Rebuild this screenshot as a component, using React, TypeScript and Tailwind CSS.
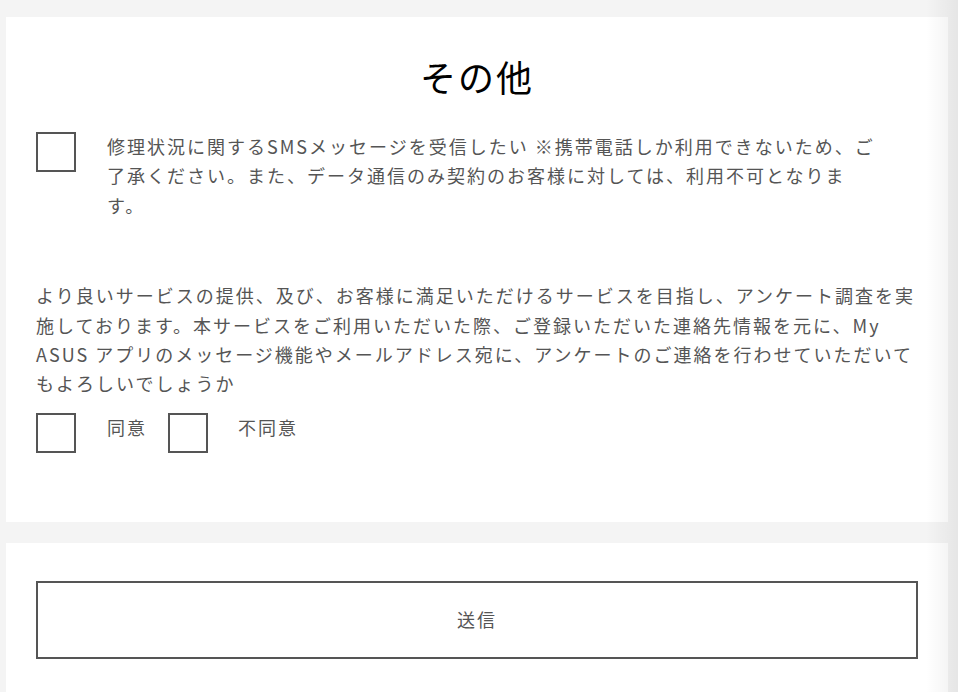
function Box() {
  return <div className="h-10 w-10 shrink-0 border-2 border-[#555]" />
}

export default function App() {
  const font = { fontFamily: '"Noto Sans CJK JP", "Noto Sans", sans-serif' }
  return (
    <div className="relative min-h-[692px] bg-[#f4f4f4] pt-[17px] pl-[6px] pr-[10px]" style={font}>
      <section className="bg-white px-[30px] pt-[34px] pb-[69px]">
        <h2 className="text-center text-[36px] leading-[51px] tracking-[2px] text-black">その他</h2>

        <div className="mt-[30px] flex items-start gap-[31px]">
          <Box />
          <p className="w-[770px] text-[18px] leading-[29.4px] tracking-[2px] text-[#555]">
            修理状況に関するSMSメッセージを受信したい ※携帯電話しか利用できないため、ご了承ください。また、データ通信のみ契約のお客様に対しては、利用不可となります。
          </p>
        </div>

        <p className="mt-[61px] text-[18px] leading-[29.4px] tracking-[2px] text-[#555]">
          より良いサービスの提供、及び、お客様に満足いただけるサービスを目指し、アンケート調査を実施しております。本サービスをご利用いただいた際、ご登録いただいた連絡先情報を元に、My
          ASUS アプリのメッセージ機能やメールアドレス宛に、アンケートのご連絡を行わせていただいてもよろしいでしょうか
        </p>

        <div className="mt-[14px] flex items-start text-[18px] leading-[29.4px] tracking-[2px] text-[#555]">
          <Box />
          <span className="ml-[31px] mr-[21px]">同意</span>
          <Box />
          <span className="ml-[30px]">不同意</span>
        </div>
      </section>

      <section className="mt-[21px] bg-white px-[30px] pt-[38px] pb-[60px]">
        <button className="flex h-[78px] w-full items-center justify-center border-2 border-[#555] bg-white text-[18px] tracking-[2px] text-[#555]">
          送信
        </button>
      </section>

      <div className="pointer-events-none absolute right-0 top-0 h-full w-[32px] bg-gradient-to-r from-transparent to-black/[0.06]" />
    </div>
  )
}
